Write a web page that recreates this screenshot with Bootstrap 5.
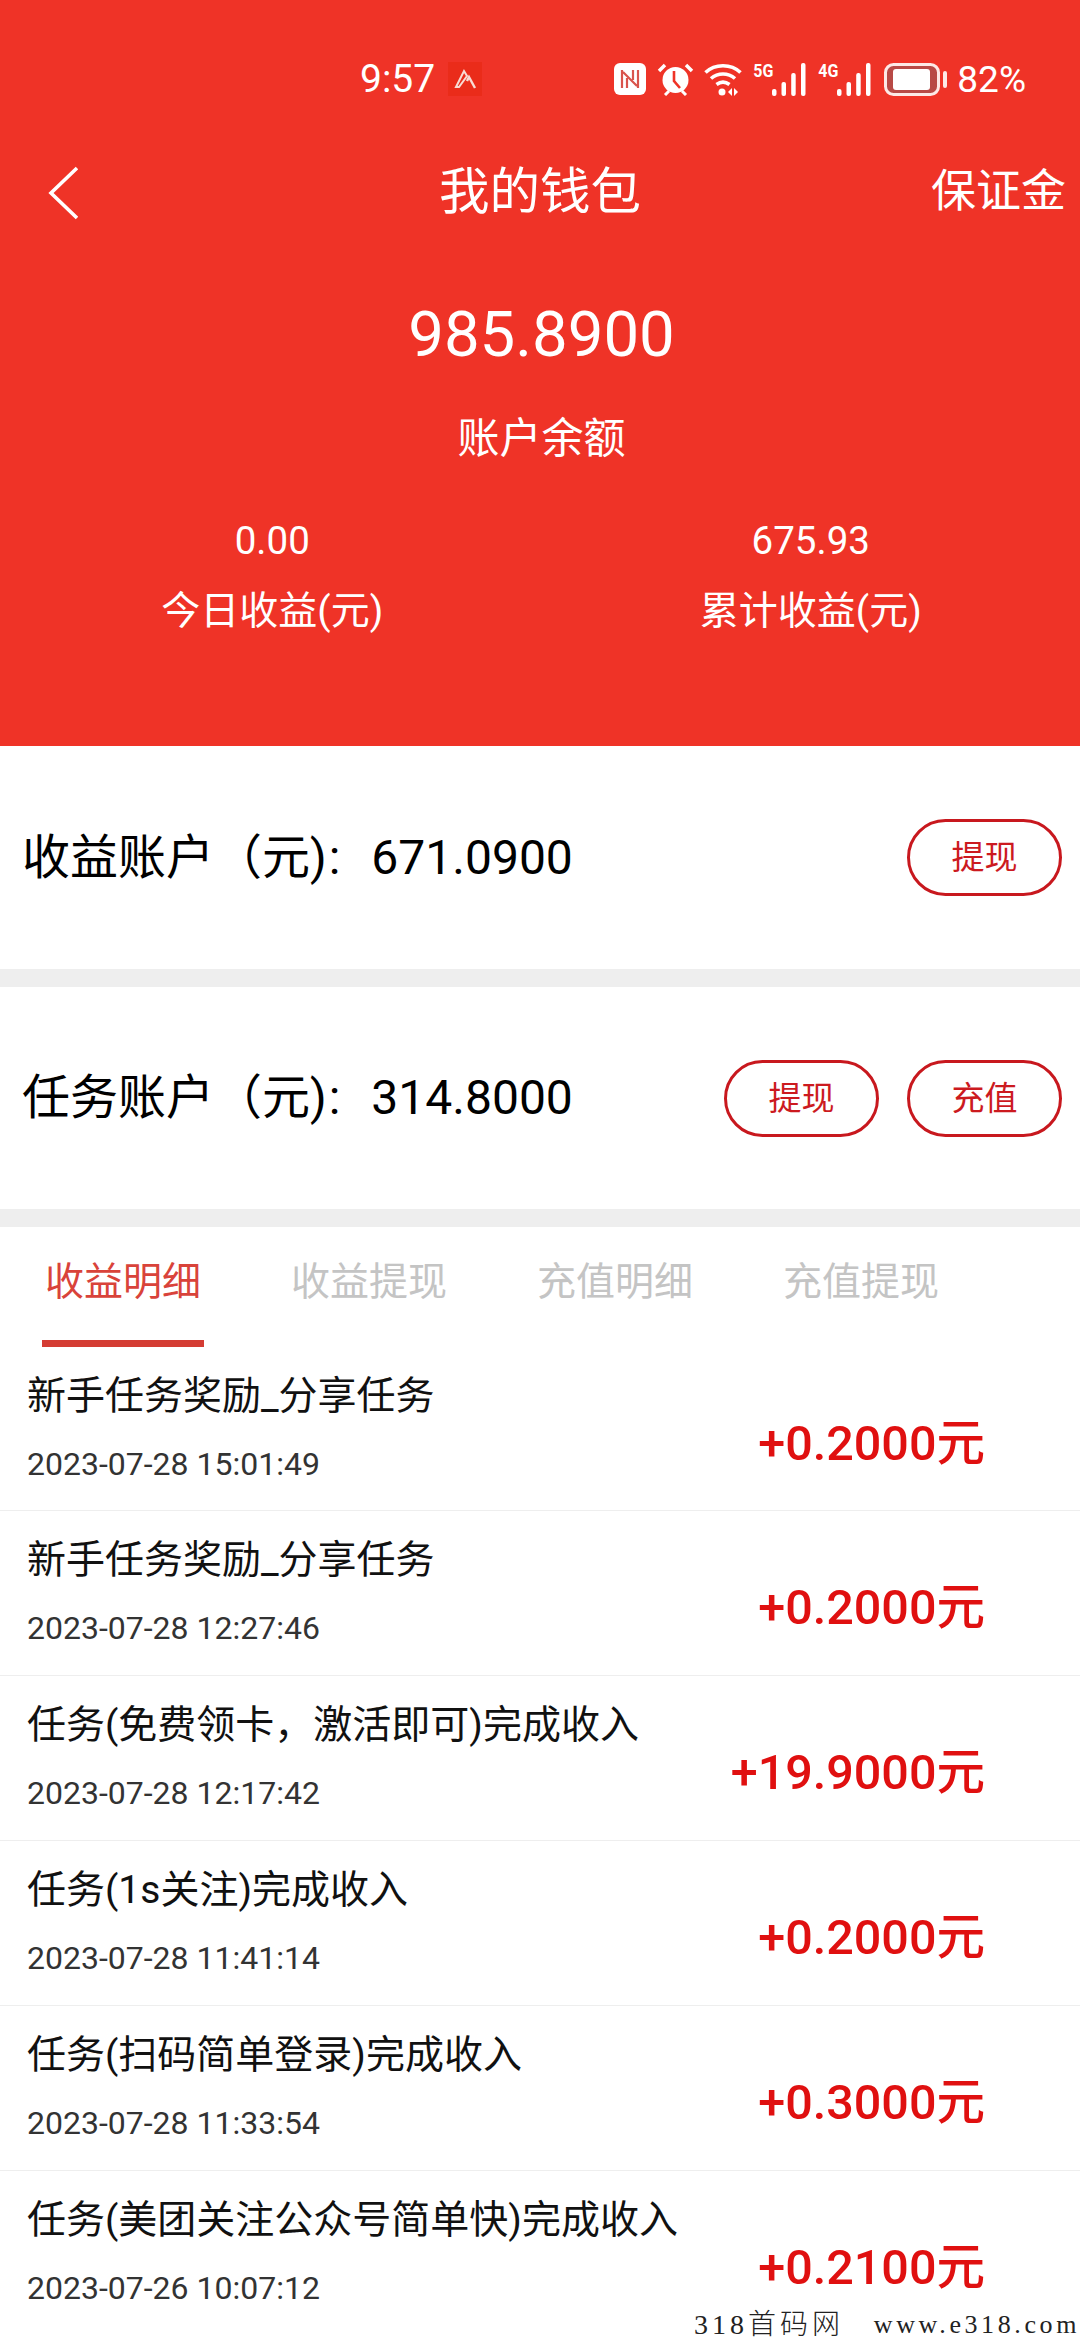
<!DOCTYPE html>
<html lang="zh-CN">
<head>
<meta charset="utf-8">
<title>我的钱包</title>
<link href="https://cdn.jsdelivr.net/npm/bootstrap@5.3.0/dist/css/bootstrap.min.css" rel="stylesheet">
<style>
html,body{margin:0;background:#fff;}
body{width:1080px;height:2340px;overflow:hidden;position:relative;font-family:Roboto,"Noto Sans CJK SC",sans-serif;color:#000;}
.hero{background:#ef3327;color:#fff;height:746px;}
.sbar{height:110px;padding:48px 54px 0 360px;display:flex;align-items:center;font-size:39px;line-height:1;}
.sbar svg{display:block;flex:none;}
.sbar-clock{width:72px;white-space:nowrap;}
.sbar-app{margin-left:16px;}
.sbar-icons{margin-left:auto;display:flex;align-items:center;}
.sbar-pct{font-size:37px;margin-left:10px;white-space:nowrap;}
.sp-a{margin-left:11px;}
.sp-b{margin-left:10px;}
.sp-c{margin-left:12px;}
.sp-d{margin-left:13px;}
.net{display:flex;height:33px;}
.net-tag{width:18px;flex:none;font-size:16px;line-height:14px;font-weight:700;transform:scaleY(1.2);transform-origin:top;}
.topnav{height:160px;padding:3px 14px 0 48px;position:relative;}
.topnav-title{font-size:50.500px;}
.topnav-right{font-size:45px;}
.topnav-back{margin-top:2px;}
.topnav-center{position:absolute;left:0;right:0;text-align:center;pointer-events:none;}
.bal-val{font-size:63.500px;line-height:130px;text-align:center;padding-left:3px;}
.bal-lbl{font-size:42px;line-height:78px;text-align:center;padding-left:3px;}
.stats{padding:33px 0 0 3px;margin:0;}
.stats > div{padding:0;text-align:center;}
.stat-val{font-size:38.500px;line-height:60px;}
.stat-lbl{font-size:39px;line-height:80px;}
.acct{height:223px;padding:0 18px 0 22px;background:#fff;}
.acct-short{height:222px;}
.acct-gap{height:18px;background:#eee;}
.acct-txt{font-size:48px;line-height:1;white-space:nowrap;}
.acct-sep{margin:0 31px 0 2px;}
.pill-row{gap:28px;}
.pill{width:155px;height:77px;border:3px solid #c8181e;border-radius:39px;background:#fff;color:#cc1a1f;font-size:33px;line-height:1;padding:0;display:flex;align-items:center;justify-content:center;}
.pill:hover{background:#fff;color:#cc1a1f;border-color:#c8181e;}
.tabbar{height:120px;margin:0;flex-wrap:nowrap;}
.tabbar .nav-item{width:246px;text-align:center;position:relative;}
.tabbar .nav-link{padding:0;font-size:39px;line-height:110px;color:#c4c4c4;}
.tabbar .nav-link.on{color:#d9433a;}
.tab-mark{position:absolute;left:42px;width:162px;bottom:0;height:7px;background:#d43c33;}
.rec{height:165px;padding:25px 95px 0 27px;border:0;border-bottom:3px solid #eee;border-radius:0!important;}
.rec:first-child{height:164px;}
.rec-title{font-size:39px;line-height:48px;color:#111;white-space:nowrap;}
.rec-time{font-size:32px;line-height:40px;margin-top:24px;color:#333;white-space:nowrap;}
.rec-amt{font-size:48.500px;line-height:60px;font-weight:500;color:#e01010;margin-top:42px;white-space:nowrap;}
.wmark{position:absolute;right:0;bottom:0;height:30px;width:386px;display:flex;justify-content:space-between;font-family:"Liberation Serif","Noto Sans CJK SC",serif;font-size:26px;line-height:30px;letter-spacing:3.600px;color:#222;white-space:nowrap;font-weight:300;}
.wmark-zh{font-size:28px;letter-spacing:4px;}
</style>
</head>
<body>
<div class="hero">
  <div class="sbar">
    <span class="sbar-clock">9:57</span>
    <svg class="sbar-app" width="34" height="34" viewBox="0 0 34 34"><rect width="34" height="34" fill="#ea2c1a"/><path d="M8 25 16 9l3 5-8 11z" fill="none" stroke="#f8dcd4" stroke-width="2"/><path d="M19 19l2-4 6 11" fill="none" stroke="#f8dcd4" stroke-width="2.400"/></svg>
    <div class="sbar-icons">
      <svg width="32" height="32" viewBox="0 0 32 32"><rect width="32" height="32" rx="6" fill="#fff"/><path d="M8 7v18M24 7v18M9 9l14 14M13 15v10M19 7v10" fill="none" stroke="#d9544c" stroke-width="2.200"/></svg>
      <svg class="sp-a" width="37" height="33" viewBox="0 0 37 33"><path d="M2 8 8 2M35 8l-6-6" stroke="#fff" stroke-width="3.500" fill="none"/><circle cx="18.500" cy="17" r="13" fill="#fff"/><path d="M8 32l4-4M29 32l-4-4" stroke="#fff" stroke-width="3" fill="none"/><path d="M17 8v10l6 7" fill="none" stroke="#ef3327" stroke-width="2.600"/></svg>
      <svg class="sp-b" width="39" height="33" viewBox="0 0 39 33"><g fill="none" stroke="#fff" stroke-width="3.600"><path d="M1.500 9.500C11 .5 27 .5 36.500 9.500"/><path d="M7 15.500c7-6 17-6 24 0"/><path d="M12.500 21.500c4-3 9-3 13 0"/></g><circle cx="18" cy="29" r="3.500" fill="#fff"/><path d="M24 29l4-4v8zM30 25l4 4-4 4z" fill="#fff"/></svg>
      <div class="net sp-b"><span class="net-tag">5G</span><svg width="35" height="33" viewBox="18 0 35 33"><g fill="#fff"><rect x="19" y="26" width="4.500" height="7" rx="2"/><rect x="28.500" y="19" width="4.500" height="14" rx="2"/><rect x="38.200" y="10" width="4.500" height="23" rx="2"/><rect x="48" y="0" width="4.500" height="33" rx="2"/></g></svg></div>
      <div class="net sp-c"><span class="net-tag">4G</span><svg width="35" height="33" viewBox="18 0 35 33"><g fill="#fff"><rect x="19" y="26" width="4.500" height="7" rx="2"/><rect x="28.500" y="19" width="4.500" height="14" rx="2"/><rect x="38.200" y="10" width="4.500" height="23" rx="2"/><rect x="48" y="0" width="4.500" height="33" rx="2"/></g></svg></div>
      <svg class="sp-d" width="63" height="33" viewBox="0 0 63 33"><rect x="1.500" y="1.500" width="53" height="30" rx="8" fill="#b84a46" stroke="#fde9e6" stroke-width="3"/><rect x="9" y="6" width="37" height="21" rx="3" fill="#fff"/><rect x="59" y="8" width="4" height="17" rx="2" fill="#fde9e6"/></svg>
      <span class="sbar-pct">82%</span>
    </div>
  </div>
  <div class="topnav d-flex align-items-center justify-content-between">
    <span class="topnav-center topnav-title">我的钱包</span>
    <svg class="topnav-back" width="30" height="54" viewBox="0 0 30 54"><path d="M29 2 3 27l26 25" fill="none" stroke="#fff" stroke-width="3.600"/></svg>
    <span class="topnav-right">保证金</span>
  </div>
  <div class="bal-val">985.8900</div>
  <div class="bal-lbl">账户余额</div>
  <div class="row stats">
    <div class="col-6"><div class="stat-val">0.00</div><div class="stat-lbl">今日收益(元)</div></div>
    <div class="col-6"><div class="stat-val">675.93</div><div class="stat-lbl">累计收益(元)</div></div>
  </div>
</div>
<div class="acct d-flex align-items-center justify-content-between">
  <div class="acct-txt">收益账户（元)<span class="acct-sep">:</span>671.0900</div>
  <div class="d-flex"><button class="btn pill">提现</button></div>
</div>
<div class="acct-gap"></div>
<div class="acct acct-short d-flex align-items-center justify-content-between">
  <div class="acct-txt">任务账户（元)<span class="acct-sep">:</span>314.8000</div>
  <div class="d-flex pill-row"><button class="btn pill">提现</button><button class="btn pill">充值</button></div>
</div>
<div class="acct-gap"></div>
<ul class="nav tabbar">
  <li class="nav-item"><a class="nav-link on" href="#">收益明细</a><span class="tab-mark"></span></li>
  <li class="nav-item"><a class="nav-link" href="#">收益提现</a></li>
  <li class="nav-item"><a class="nav-link" href="#">充值明细</a></li>
  <li class="nav-item"><a class="nav-link" href="#">充值提现</a></li>
</ul>
<div class="list-group list-group-flush">
  <div class="list-group-item rec d-flex justify-content-between"><div><div class="rec-title">新手任务奖励_分享任务</div><div class="rec-time">2023-07-28 15:01:49</div></div><div class="rec-amt">+0.2000元</div></div>
  <div class="list-group-item rec d-flex justify-content-between"><div><div class="rec-title">新手任务奖励_分享任务</div><div class="rec-time">2023-07-28 12:27:46</div></div><div class="rec-amt">+0.2000元</div></div>
  <div class="list-group-item rec d-flex justify-content-between"><div><div class="rec-title">任务(免费领卡，激活即可)完成收入</div><div class="rec-time">2023-07-28 12:17:42</div></div><div class="rec-amt">+19.9000元</div></div>
  <div class="list-group-item rec d-flex justify-content-between"><div><div class="rec-title">任务(1s关注)完成收入</div><div class="rec-time">2023-07-28 11:41:14</div></div><div class="rec-amt">+0.2000元</div></div>
  <div class="list-group-item rec d-flex justify-content-between"><div><div class="rec-title">任务(扫码简单登录)完成收入</div><div class="rec-time">2023-07-28 11:33:54</div></div><div class="rec-amt">+0.3000元</div></div>
  <div class="list-group-item rec d-flex justify-content-between"><div><div class="rec-title">任务(美团关注公众号简单快)完成收入</div><div class="rec-time">2023-07-26 10:07:12</div></div><div class="rec-amt">+0.2100元</div></div>
</div>
<div class="wmark"><span class="wmark-zh">318首码网</span><span>www.e318.com</span></div>
<script src="https://cdn.jsdelivr.net/npm/bootstrap@5.3.0/dist/js/bootstrap.bundle.min.js"></script>
</body>
</html>
